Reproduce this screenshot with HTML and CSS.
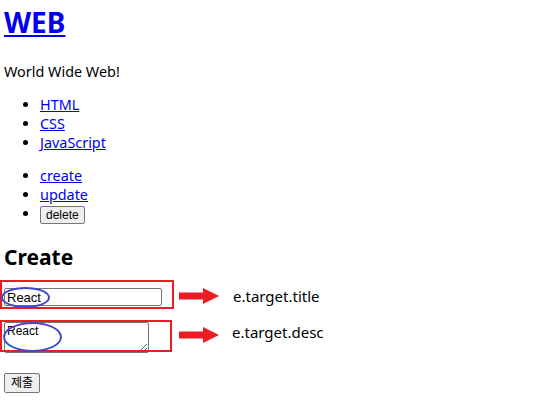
FILE: index.html
```html
<!DOCTYPE html>
<html lang="ko">

<head>
  <meta charset="UTF-8">
  <meta name="viewport" content="width=device-width, initial-scale=1.0">
  <title>WEB</title>
  <link rel="stylesheet" href="styles.css">
</head>

<body>
  <header>
    <h1><a href="/">WEB</a></h1>
  </header>
  <p class="intro">World Wide Web!</p>
  <ul class="nav">
    <li><a href="/read/1">HTML</a></li>
    <li><a href="/read/2">CSS</a></li>
    <li><a href="/read/3">JavaScript</a></li>
  </ul>
  <ul class="ctrl">
    <li><a href="/create">create</a></li>
    <li><a href="/update">update</a></li>
    <li><button type="button" class="btn">delete</button></li>
  </ul>

  <h2>Create</h2>
  <form class="create">
    <div class="row row-title">
      <div class="field">
        <input type="text" name="title" value="React">
        <span class="mark"></span>
        <span class="ring"></span>
      </div>
      <svg class="arrow" width="40" height="16" viewBox="0 0 40 16">
        <path d="M0 4.5 H24 V0 L40 8 L24 16 V11.5 H0 Z" fill="#ec1c24" />
      </svg>
      <span class="note">e.target.title</span>
    </div>
    <div class="row row-desc">
      <div class="field">
        <textarea name="desc">React</textarea>
        <span class="mark"></span>
        <span class="ring"></span>
      </div>
      <svg class="arrow" width="40" height="16" viewBox="0 0 40 16">
        <path d="M0 4.5 H24 V0 L40 8 L24 16 V11.5 H0 Z" fill="#ec1c24" />
      </svg>
      <span class="note">e.target.desc</span>
    </div>
    <p class="submit"><button type="submit" class="btn">제출</button></p>
  </form>
</body>

</html>
```

FILE: styles.css
```css
* {
  box-sizing: border-box;
}

body {
  margin: 0;
  padding: 0 4px;
  font-family: "Noto Sans", "Noto Sans CJK KR", sans-serif;
  font-size: 14.4px;
  line-height: 19px;
  color: #000;
  background: #fff;
}

a {
  color: #0000ee;
}

h1 {
  margin: 0;
  padding-top: 3px;
  font-size: 28px;
  line-height: 38px;
  font-weight: bold;
}

.intro {
  margin: 21px 0 14px;
}

ul {
  margin: 14px 0;
  padding-left: 36px;
}

h2 {
  margin: 19px 0 17px;
  font-size: 21px;
  line-height: 28px;
  font-weight: bold;
}

.btn {
  margin: 0;
  padding: 0 5px;
  height: 18px;
  font-family: "Liberation Sans", "Noto Sans CJK KR", sans-serif;
  font-size: 12px;
  line-height: 14px;
  color: #000;
  background: #efefef;
  border: 1px solid #767676;
  border-radius: 2px;
}

.row {
  display: flex;
  align-items: center;
}

.field {
  position: relative;
  flex: none;
  width: 158px;
}

.field input {
  display: block;
  width: 158px;
  height: 18px;
  margin: 0;
  padding: 0 2px;
  font-family: "Liberation Sans", sans-serif;
  font-size: 13px;
  border: 1px solid #767676;
  border-radius: 2px;
}

.field textarea {
  display: block;
  width: 145px;
  height: 31px;
  margin: 0;
  padding: 1px 2px;
  font-family: "Liberation Sans", sans-serif;
  font-size: 12px;
  line-height: 14px;
  border: 1px solid #767676;
  border-radius: 2px;
  resize: both;
}

.mark {
  position: absolute;
  border: 2px solid #ec1c24;
}

.ring {
  position: absolute;
  border: 2px solid #3f48cc;
  border-radius: 50%;
}

.row-title .mark {
  left: -4px;
  top: -8px;
  right: -12px;
  bottom: -3px;
}

.row-title .ring {
  left: -3px;
  top: -1px;
  width: 49px;
  height: 21px;
}

.row-desc {
  margin-top: 16px;
}

.row-desc .mark {
  left: -4px;
  top: -2px;
  right: -10px;
  bottom: 1px;
}

.row-desc .ring {
  left: -1px;
  top: 0;
  width: 59px;
  height: 30px;
}

.arrow {
  flex: none;
  margin-left: 17px;
  margin-top: -3px;
}

.note {
  margin-left: 14px;
  margin-top: -2px;
  font-size: 15px;
}

.row-desc .arrow {
  margin-top: -6px;
}

.row-desc .note {
  margin-left: 13px;
  margin-top: -10px;
}

.submit {
  margin: 19px 0 0;
}

.submit .btn {
  height: 20px;
  padding: 0 6px;
}
```
